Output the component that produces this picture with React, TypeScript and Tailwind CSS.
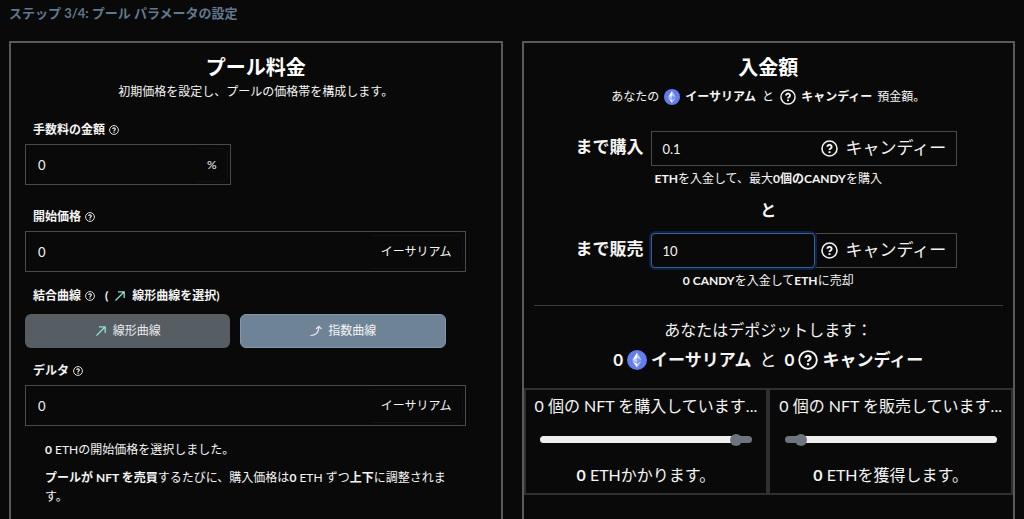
import { ReactNode, useState } from "react";

interface IconProps {
  className?: string;
}

function HelpIcon({ className }: IconProps) {
  return (
    <svg viewBox="0 0 24 24" fill="none" stroke="currentColor" className={className} aria-hidden="true">
      <circle cx="12" cy="12" r="10.6" strokeWidth="2.2" />
      <path d="M9 9.6a3 2.8 0 1 1 4.6 2.4c-1 .6-1.6 1-1.6 2.2" strokeWidth="2.8" />
      <path d="M12 15.8v2.6" strokeWidth="2.8" />
    </svg>
  );
}

function EthIcon({ className }: IconProps) {
  return (
    <svg viewBox="0 0 32 32" className={className} aria-hidden="true">
      <circle cx="16" cy="16" r="16" fill="#627eea" />
      <path d="M16 4v8.9l7.5 3.3z" fill="#fff" fillOpacity=".6" />
      <path d="M16 4 8.5 16.2l7.5-3.3z" fill="#fff" />
      <path d="M16 22v6l7.5-10.4z" fill="#fff" fillOpacity=".6" />
      <path d="M16 28v-6l-7.5-4.4z" fill="#fff" />
      <path d="m16 20.6 7.5-4.4-7.5-3.3z" fill="#fff" fillOpacity=".2" />
      <path d="m8.5 16.2 7.5 4.4v-7.7z" fill="#fff" fillOpacity=".6" />
    </svg>
  );
}

function LinearIcon() {
  return (
    <svg viewBox="0 0 12 12" fill="none" stroke="#93ded6" strokeWidth="1.3" className="size-3 shrink-0" aria-hidden="true">
      <path d="M1.5 10.5 10 2M4 1.8h6.2V8" />
    </svg>
  );
}

function ExponentialIcon() {
  return (
    <svg viewBox="0 0 12 12" fill="none" stroke="#eadcf0" strokeWidth="1.2" className="size-3 shrink-0" aria-hidden="true">
      <path d="M.5 10.5C6 10.5 8.8 8 8.8 1.6M6 4l2.8-2.6L11.6 4" />
    </svg>
  );
}

interface AmountFieldProps {
  id: string;
  label: string;
  unit: string;
  width: string;
}

function AmountField({ id, label, unit, width }: AmountFieldProps) {
  const [value, setValue] = useState("0");

  return (
    <>
      <label htmlFor={id} className="ml-[22px] flex h-5 items-center gap-1 font-bold">
        {label}
        <HelpIcon className="size-2.5" />
      </label>
      <div className={`ml-3.5 mt-1 flex h-[41px] items-center border border-[#4a4a4a] ${width}`}>
        <input
          id={id}
          value={value}
          onChange={(e) => setValue(e.target.value)}
          className="h-full min-w-0 flex-1 bg-transparent pl-3 text-[13px] outline-none"
        />
        <span className="mr-0.5 flex h-[34px] items-center rounded-r-md border-y border-r border-[#101018] px-2.5">
          {unit}
        </span>
      </div>
    </>
  );
}

interface TokenFieldProps {
  id: string;
  label: string;
  initial: string;
  focused?: boolean;
  children: ReactNode;
}

function TokenField({ id, label, initial, focused, children }: TokenFieldProps) {
  const [value, setValue] = useState(initial);

  return (
    <div>
      <div className="grid grid-cols-[24.5%_62.5%] gap-x-2">
        <label htmlFor={id} className="text-right text-[17px] font-bold leading-8">
          {label}
        </label>
        <div className="flex h-[35px] items-center border border-[#4a4a4a]">
          <input
            id={id}
            value={value}
            onChange={(e) => setValue(e.target.value)}
            className={
              focused
                ? "-ml-px h-[35px] min-w-0 flex-1 rounded-sm border border-[#3f5f93] bg-transparent pl-2.5 text-[13px] outline-2 outline-[#0b2143]"
                : "h-full min-w-0 flex-1 bg-transparent pl-2.5 text-[13px] outline-none"
            }
          />
          <span className="flex items-center gap-2 pl-1.5 pr-2.5 text-[17px]">
            <HelpIcon className="size-[17px]" />
            キャンディー
          </span>
        </div>
      </div>
      <p className="mt-[3px] text-center leading-5">{children}</p>
    </div>
  );
}

interface TradeSliderProps {
  title: string;
  label: string;
  initial: number;
  reversed?: boolean;
  children: ReactNode;
}

function TradeSlider({ title, label, initial, reversed, children }: TradeSliderProps) {
  const [value, setValue] = useState(initial);
  const colors = reversed ? ["#efefef", "#6c757d"] : ["#6c757d", "#efefef"];

  return (
    <div className="flex min-w-0 flex-col items-center border-2 border-[#303030] pb-1 pt-1 text-base">
      <p className="w-full truncate text-center leading-6">{title}</p>
      <input
        type="range"
        aria-label={label}
        value={value}
        onChange={(e) => setValue(Number(e.target.value))}
        style={{ background: `linear-gradient(to right, ${colors[0]} ${value}%, ${colors[1]} ${value}%)` }}
        className="my-[18px] h-[7px] w-[88%] appearance-none rounded-full [&::-webkit-slider-thumb]:size-3 [&::-webkit-slider-thumb]:appearance-none [&::-webkit-slider-thumb]:rounded-full [&::-webkit-slider-thumb]:bg-[#6c757d]"
      />
      <p className="leading-7">{children}</p>
    </div>
  );
}

export default function App() {
  return (
    <main className="h-screen overflow-hidden bg-[#090909] px-[9px] pt-[3px] font-[Lato,'Noto_Sans_CJK_JP',sans-serif] text-xs font-normal text-[#f4f4f4]">
      <h1 className="h-5 text-[13px] font-bold leading-5 text-[#61788e]">ステップ 3/4: プール パラメータの設定</h1>

      <div className="mt-[18px] grid min-h-full grid-cols-2 gap-[19px]">
        <section className="border-2 border-[#5a5a5a] pt-2">
          <h2 className="text-center text-xl font-bold leading-8 text-white">プール料金</h2>
          <p className="text-center leading-[18px]">初期価格を設定し、プールの価格帯を構成します。</p>

          <div className="mt-[19px]">
            <AmountField id="fee" label="手数料の金額" unit="%" width="w-[42%]" />
          </div>
          <div className="mt-[22px]">
            <AmountField id="start-price" label="開始価格" unit="イーサリアム" width="w-[90%]" />
          </div>

          <div className="ml-[22px] mt-3.5 flex h-5 items-center gap-1 font-bold">
            結合曲線
            <HelpIcon className="size-2.5" />
            <span className="ml-1.5 flex items-center gap-1.5">
              ( <LinearIcon /> 線形曲線を選択)
            </span>
          </div>
          <div className="ml-3.5 mt-2 grid w-[86%] grid-cols-2 gap-2.5">
            <button type="button" className="flex h-[34px] items-center justify-center gap-1.5 rounded-md bg-[#565e64] text-[#e8ebed]">
              <LinearIcon />
              線形曲線
            </button>
            <button type="button" className="flex h-[34px] items-center justify-center gap-1.5 rounded-md border border-[#8496ad] bg-[#6f8397]">
              <ExponentialIcon />
              指数曲線
            </button>
          </div>

          <div className="mt-[13px]">
            <AmountField id="delta" label="デルタ" unit="イーサリアム" width="w-[90%]" />
          </div>

          <div className="ml-[34px] mr-10 mt-3.5 leading-[19px]">
            <p>
              <b>0</b> ETHの開始価格を選択しました。
            </p>
            <p className="mt-[9px]">
              <b>プールが NFT を売買</b>するたびに、購入価格は<b>0</b> ETH ずつ<b>上下</b>に調整されます。
            </p>
          </div>
        </section>

        <section className="border-2 border-[#5a5a5a] pt-2">
          <h2 className="text-center text-xl font-bold leading-8 text-white">入金額</h2>
          <p className="mt-1 flex h-5 items-center justify-center gap-[5px]">
            あなたの
            <EthIcon className="size-4" />
            <b>イーサリアム</b>
            <span className="mx-px">と</span>
            <HelpIcon className="size-4" />
            <b>キャンディー</b>
            預金額。
          </p>

          <div className="mt-6">
            <TokenField id="buy-up-to" label="まで購入" initial="0.1">
              <b>ETH</b>を入金して、最大<b>0個のCANDY</b>を購入
            </TokenField>
          </div>
          <p className="mb-2.5 mt-2 text-center text-base font-bold leading-[26px]">と</p>
          <TokenField id="sell-up-to" label="まで販売" initial="10" focused>
            <b>0 CANDY</b>を入金して<b>ETH</b>に売却
          </TokenField>

          <hr className="mx-2.5 mt-3.5 border-[#3a3a3a]" />

          <div className="mt-[9px] text-center text-base leading-[30px]">
            <p>あなたはデポジットします：</p>
            <p className="flex items-center justify-center gap-1 text-[17px] leading-[30px]">
              <b>0</b>
              <EthIcon className="size-5" />
              <b>イーサリアム</b>
              <span className="mx-1">と</span>
              <b>0</b>
              <HelpIcon className="size-5" />
              <b>キャンディー</b>
            </p>
          </div>

          <div className="mt-[13px] grid grid-cols-2">
            <TradeSlider title="0 個の NFT を購入しています..." label="購入する NFT の数" initial={95} reversed>
              <b>0</b> ETHかかります。
            </TradeSlider>
            <TradeSlider title="0 個の NFT を販売しています..." label="販売する NFT の数" initial={5}>
              <b>0</b> ETHを獲得します。
            </TradeSlider>
          </div>
        </section>
      </div>
    </main>
  );
}
